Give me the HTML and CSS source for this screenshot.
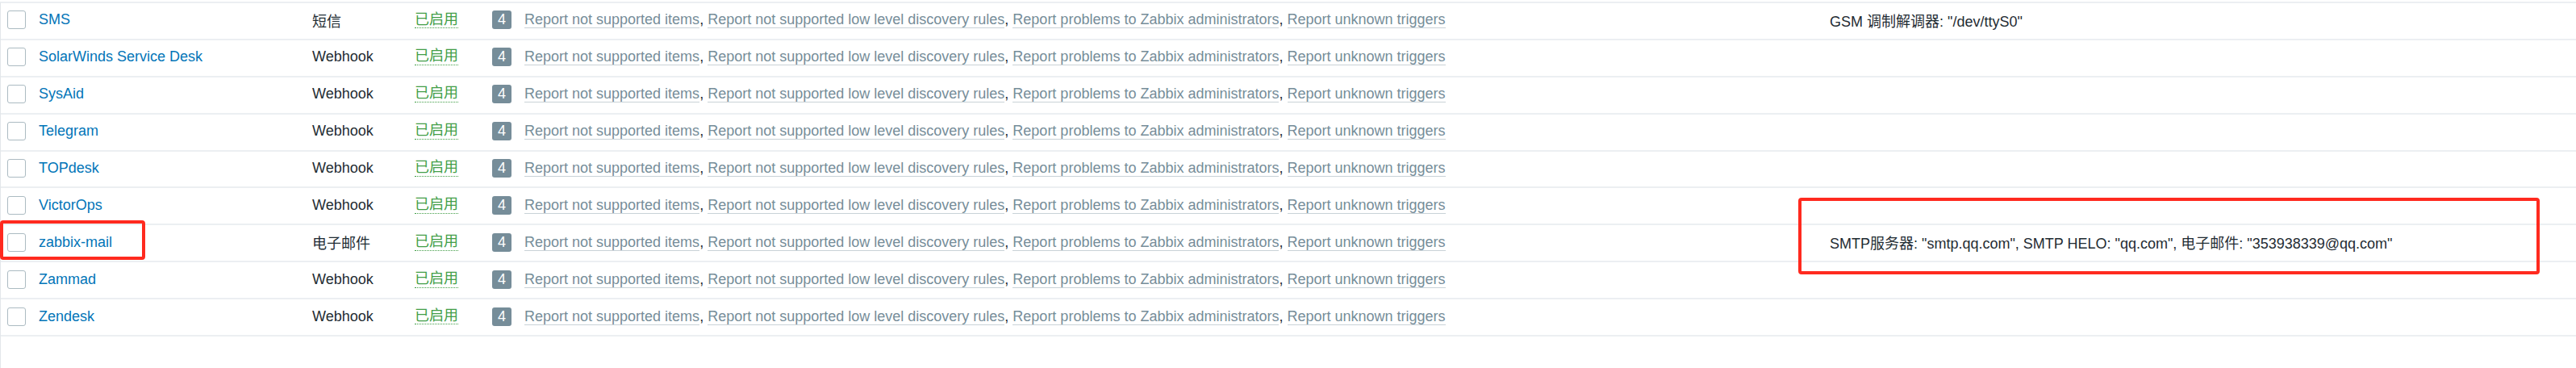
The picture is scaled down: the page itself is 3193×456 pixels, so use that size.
FILE: index.html
```html
<!DOCTYPE html>
<html lang="zh-CN">
<head>
<meta charset="utf-8">
<title>Media types</title>
<link rel="stylesheet" href="styles.css">
</head>
<body>
<div class="page">
  <div class="table">
    <div class="row">
      <span class="cell"><span class="checkbox"></span></span>
      <a class="name">SMS</a>
      <span class="type">短信</span>
      <span class="cell"><a class="status">已启用</a></span>
      <span class="actions"><span class="badge">4</span><span class="links"><a class="link">Report not supported items</a>, <a class="link">Report not supported low level discovery rules</a>, <a class="link">Report problems to Zabbix administrators</a>, <a class="link">Report unknown triggers</a></span></span>
      <span class="desc">GSM 调制解调器: "/dev/ttyS0"</span>
    </div>
    <div class="row">
      <span class="cell"><span class="checkbox"></span></span>
      <a class="name">SolarWinds Service Desk</a>
      <span class="type">Webhook</span>
      <span class="cell"><a class="status">已启用</a></span>
      <span class="actions"><span class="badge">4</span><span class="links"><a class="link">Report not supported items</a>, <a class="link">Report not supported low level discovery rules</a>, <a class="link">Report problems to Zabbix administrators</a>, <a class="link">Report unknown triggers</a></span></span>
      <span class="desc"></span>
    </div>
    <div class="row">
      <span class="cell"><span class="checkbox"></span></span>
      <a class="name">SysAid</a>
      <span class="type">Webhook</span>
      <span class="cell"><a class="status">已启用</a></span>
      <span class="actions"><span class="badge">4</span><span class="links"><a class="link">Report not supported items</a>, <a class="link">Report not supported low level discovery rules</a>, <a class="link">Report problems to Zabbix administrators</a>, <a class="link">Report unknown triggers</a></span></span>
      <span class="desc"></span>
    </div>
    <div class="row">
      <span class="cell"><span class="checkbox"></span></span>
      <a class="name">Telegram</a>
      <span class="type">Webhook</span>
      <span class="cell"><a class="status">已启用</a></span>
      <span class="actions"><span class="badge">4</span><span class="links"><a class="link">Report not supported items</a>, <a class="link">Report not supported low level discovery rules</a>, <a class="link">Report problems to Zabbix administrators</a>, <a class="link">Report unknown triggers</a></span></span>
      <span class="desc"></span>
    </div>
    <div class="row">
      <span class="cell"><span class="checkbox"></span></span>
      <a class="name">TOPdesk</a>
      <span class="type">Webhook</span>
      <span class="cell"><a class="status">已启用</a></span>
      <span class="actions"><span class="badge">4</span><span class="links"><a class="link">Report not supported items</a>, <a class="link">Report not supported low level discovery rules</a>, <a class="link">Report problems to Zabbix administrators</a>, <a class="link">Report unknown triggers</a></span></span>
      <span class="desc"></span>
    </div>
    <div class="row">
      <span class="cell"><span class="checkbox"></span></span>
      <a class="name">VictorOps</a>
      <span class="type">Webhook</span>
      <span class="cell"><a class="status">已启用</a></span>
      <span class="actions"><span class="badge">4</span><span class="links"><a class="link">Report not supported items</a>, <a class="link">Report not supported low level discovery rules</a>, <a class="link">Report problems to Zabbix administrators</a>, <a class="link">Report unknown triggers</a></span></span>
      <span class="desc"></span>
    </div>
    <div class="row">
      <span class="cell"><span class="checkbox"></span></span>
      <a class="name">zabbix-mail</a>
      <span class="type">电子邮件</span>
      <span class="cell"><a class="status">已启用</a></span>
      <span class="actions"><span class="badge">4</span><span class="links"><a class="link">Report not supported items</a>, <a class="link">Report not supported low level discovery rules</a>, <a class="link">Report problems to Zabbix administrators</a>, <a class="link">Report unknown triggers</a></span></span>
      <span class="desc">SMTP服务器: "smtp.qq.com", SMTP HELO: "qq.com", 电子邮件: "353938339@qq.com"</span>
    </div>
    <div class="row">
      <span class="cell"><span class="checkbox"></span></span>
      <a class="name">Zammad</a>
      <span class="type">Webhook</span>
      <span class="cell"><a class="status">已启用</a></span>
      <span class="actions"><span class="badge">4</span><span class="links"><a class="link">Report not supported items</a>, <a class="link">Report not supported low level discovery rules</a>, <a class="link">Report problems to Zabbix administrators</a>, <a class="link">Report unknown triggers</a></span></span>
      <span class="desc"></span>
    </div>
    <div class="row">
      <span class="cell"><span class="checkbox"></span></span>
      <a class="name">Zendesk</a>
      <span class="type">Webhook</span>
      <span class="cell"><a class="status">已启用</a></span>
      <span class="actions"><span class="badge">4</span><span class="links"><a class="link">Report not supported items</a>, <a class="link">Report not supported low level discovery rules</a>, <a class="link">Report problems to Zabbix administrators</a>, <a class="link">Report unknown triggers</a></span></span>
      <span class="desc"></span>
    </div>
  </div>
  <div class="mark mark-name"></div>
  <div class="mark mark-desc"></div>
</div>
</body>
</html>
```

FILE: styles.css
```css
html, body {
  margin: 0;
  padding: 0;
  background: #ffffff;
}

body {
  font-family: "Liberation Sans", Arial, "Noto Sans CJK SC", sans-serif;
  font-size: 18px;
  color: #1f2c33;
}

.page {
  position: relative;
  width: 3193px;
  height: 456px;
  overflow: hidden;
}

.table {
  height: 456px;
  box-sizing: border-box;
  border-left: 1px solid #e3e7ea;
  border-top: 2px solid #eceff2;
  margin-top: 2px;
}

.row {
  display: grid;
  grid-template-columns: 47px 339px 127px 96px 1658px 1fr;
  align-items: center;
  height: 45.9px;
  box-sizing: border-box;
  border-bottom: 2px solid #eceff2;
  padding-bottom: 2px;
}

.cell {
  display: flex;
  align-items: center;
}

.checkbox {
  display: block;
  width: 23px;
  height: 23px;
  margin-left: 8px;
  box-sizing: border-box;
  border: 1px solid #acbbc2;
  border-radius: 3px;
  background: #ffffff;
}

.name {
  color: #0275b8;
  white-space: nowrap;
}

.type {
  color: #1f2c33;
  white-space: nowrap;
}

.status {
  color: #429e47;
  border-bottom: 1px dotted #429e47;
  line-height: 1.1;
}

.actions {
  display: flex;
  align-items: center;
  gap: 16px;
  white-space: nowrap;
}

.badge {
  display: inline-flex;
  align-items: center;
  justify-content: center;
  width: 24px;
  height: 23px;
  border-radius: 3px;
  background: #768d99;
  color: #ffffff;
}

.links {
  color: #1f2c33;
}

.link {
  color: #768d99;
  border-bottom: 1px solid #c9d2d7;
}

.desc {
  color: #1f2c33;
  white-space: nowrap;
}

.mark {
  position: absolute;
  border: 4px solid #ff2a1f;
  border-radius: 4px;
  box-sizing: border-box;
}

.mark-name {
  left: 0;
  top: 273px;
  width: 180px;
  height: 49px;
}

.mark-desc {
  left: 2229px;
  top: 245px;
  width: 919px;
  height: 95px;
}
```
